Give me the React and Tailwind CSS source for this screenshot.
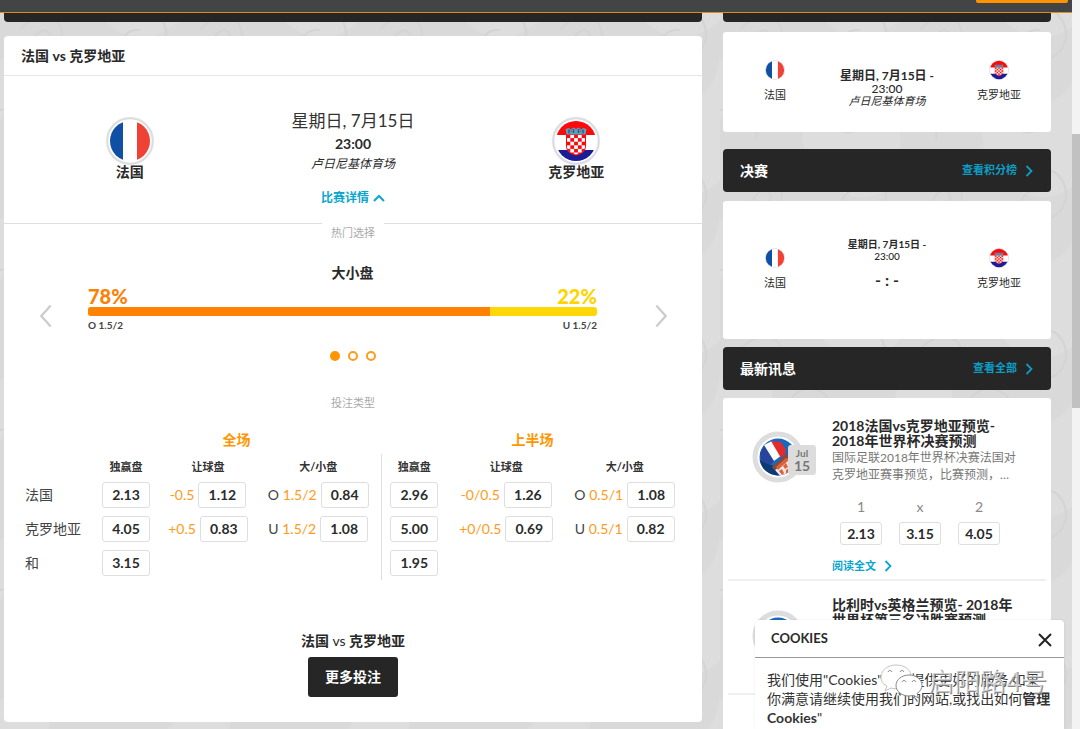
import { useId } from "react";

function Chevron({ className, d, width = 2 }) {
  return (
    <svg viewBox="0 0 12 20" className={className} fill="none" stroke="currentColor" strokeWidth={width} aria-hidden="true">
      <path d={d} />
    </svg>
  );
}

const RIGHT = "M2 1 10 10 2 19";
const LEFT = "M10 1 2 10 10 19";

function ChevronSmall() {
  return (
    <svg viewBox="0 0 8 12" className="h-3 w-2" fill="none" stroke="currentColor" strokeWidth="1.8" aria-hidden="true">
      <path d="M1.5 1 6.5 6 1.5 11" />
    </svg>
  );
}

function FlagFrance({ className, ring }) {
  const id = useId();
  return (
    <svg viewBox="0 0 48 48" className={className} aria-hidden="true">
      <clipPath id={id}>
        <circle cx="24" cy="24" r={ring ? 20 : 22} />
      </clipPath>
      <circle cx="24" cy="24" r="22.8" fill="#fff" stroke="#dedede" strokeWidth="2.2" />
      <g clipPath={`url(#${id})`}>
        <path fill="#0f50a5" d="M0 0h17v48H0z" />
        <path fill="#fff" d="M17 0h14v48H17z" />
        <path fill="#f04136" d="M31 0h17v48H31z" />
      </g>
    </svg>
  );
}

const checks = [];
for (let row = 0; row < 6; row += 1) {
  for (let col = 0; col < 5; col += 1) {
    if ((row + col) % 2 === 0) checks.push([14.5 + col * 3.8, 17.5 + row * 3.6]);
  }
}

function FlagCroatia({ className, ring }) {
  const id = useId();
  return (
    <svg viewBox="0 0 48 48" className={className} aria-hidden="true">
      <clipPath id={`${id}a`}>
        <circle cx="24" cy="24" r={ring ? 20 : 22} />
      </clipPath>
      <clipPath id={`${id}b`}>
        <path d="M14.5 17.5h19v11.5c0 5-4 8-9.5 9-5.5-1-9.500-4-9.500-9z" />
      </clipPath>
      <circle cx="24" cy="24" r="22.8" fill="#fff" stroke="#dcdce2" strokeWidth="2.2" />
      <g clipPath={`url(#${id}a)`}>
        <path fill="#fff" d="M0 0h48v48H0z" />
        <path fill="#fb0a0c" d="M0 0h48v18H0z" />
        <path fill="#1b1c96" d="M0 33h48v15H0z" />
      </g>
      <g clipPath={`url(#${id}b)`}>
        <path fill="#fff" d="M14 17h20v22H14z" />
        {checks.map(([x, y]) => (
          <rect key={`${x}-${y}`} x={x} y={y} width="3.8" height="3.6" fill="#fb0a0c" />
        ))}
      </g>
      <path d="M14.500 17.500h19v11.500c0 5-4 8-9.500 9-5.500-1-9.500-4-9.500-9z" fill="none" stroke="#fb0a0c" strokeWidth="1" />
      <path d="M14.500 17.500 13.500 12l3.500-1 2 1.500 2.500-2L24 12l2.500-1.500 2.500 2 2-1.500 3.500 1-1 5.500z" fill="#5e9fb5" />
      <path d="M17 12.500v4M21.500 12v4M26.500 12v4M31 12.500v4" stroke="#3054a0" strokeWidth="1.4" />
      <path d="M19.200 13v2M28.800 13v2" stroke="#c0504a" strokeWidth="1" />
    </svg>
  );
}

function NewsBall() {
  const id = useId();
  return (
    <svg viewBox="0 0 52 52" className="size-[52px]" aria-hidden="true">
      <clipPath id={id}>
        <circle cx="26" cy="26" r="18.5" />
      </clipPath>
      <circle cx="26" cy="26" r="23" fill="#fff" stroke="#dedddd" strokeWidth="5" />
      <g clipPath={`url(#${id})`}>
        <path fill="#1769bd" d="M0 0h52v52H0z" />
        <path fill="#0d3a75" d="M6 28 24 36 44 24V52H6z" />
        <path fill="#27449b" d="M8 22 13 14l10 15-5 5-9-4z" />
        <path fill="#fff" d="M12 14 20 10l10 14-8 6z" />
        <path fill="#e22b2e" d="M19 10 29 11l5 8-1 5-4 3z" />
        <path fill="#8a4a3a" d="M20 36 35 23l5-1-1 4-17 13z" />
        <path fill="#f3e9e6" d="M23 39 38 27l7 3-7 12-9 4z" />
        <path fill="#e0603c" d="m24 36 10-9 4 1-12 11zM31 35l3-3 2 4-3 2zM27 40l3-2 2 4-2 2zM34 39l3-2v5l-3 1z" />
      </g>
    </svg>
  );
}

function Backdrop() {
  return (
    <svg className="absolute inset-0 -z-10 size-full" aria-hidden="true">
      <defs>
        <pattern id="swirls" width="180" height="160" patternUnits="userSpaceOnUse">
          <rect width="180" height="160" fill="#dddddd" />
          <path d="M0 60c40-30 70 10 40 40S-10 100 0 150v10H90c-20-30 0-70 40-60s50-30 50-50V20c-30 30-70 20-90-20H0z" fill="#d9d9d9" />
          <g fill="none" stroke="#d4d4d4" strokeWidth="2">
            <path d="M20 30c20-25 50-10 40 12s-36 12-26-4 22-2 14 4" />
            <path d="M100 130c-15-30 20-50 38-30s-6 42-20 28 4-24 12-14" />
            <path d="M150 10c25 10 20 50-10 50s-20-34 0-30M0 110c20-6 40 8 36 30M70 80c10-16 30-14 40 0" />
          </g>
        </pattern>
      </defs>
      <rect width="100%" height="100%" fill="url(#swirls)" />
    </svg>
  );
}

function Odd({ children, small }) {
  return (
    <button
      type="button"
      className={
        small
          ? "h-[23px] w-[42px] rounded-[3px] border border-[#dedede] bg-white text-sm leading-none font-bold text-[#2b2b2b]"
          : "h-[26px] w-12 rounded-[3px] border border-[#dedede] bg-white text-sm leading-none font-bold text-[#2b2b2b]"
      }
    >
      {children}
    </button>
  );
}

function Line({ side, value, odd }) {
  return (
    <div className="flex items-center justify-center gap-1 whitespace-nowrap">
      <span className="text-[#ff9a1c]">
        {side && <span className="text-[#444]">{side} </span>}
        {value}
      </span>
      <Odd>{odd}</Odd>
    </div>
  );
}

const rows = [
  { name: "法国", full: ["2.13", ["", "-0.5", "1.12"], ["O", "1.5/2", "0.84"]], half: ["2.96", ["", "-0/0.5", "1.26"], ["O", "0.5/1", "1.08"]] },
  { name: "克罗地亚", full: ["4.05", ["", "+0.5", "0.83"], ["U", "1.5/2", "1.08"]], half: ["5.00", ["", "+0/0.5", "0.69"], ["U", "0.5/1", "0.82"]] },
  { name: "和", full: ["3.15"], half: ["1.95"] },
];

function OddCells({ cells, divided }) {
  return [0, 1, 2].map((i) => {
    const cell = cells[i];
    return (
      <td key={i} className={divided && i === 0 ? "border-l border-[#dedede] p-0 text-center" : "p-0 text-center"}>
        {typeof cell === "string" && <Odd>{cell}</Odd>}
        {Array.isArray(cell) && <Line side={cell[0]} value={cell[1]} odd={cell[2]} />}
      </td>
    );
  });
}

function OddsTable() {
  return (
    <table className="w-full table-fixed border-collapse text-sm leading-none text-[#444]">
      <colgroup>
        <col className="w-[88px]" />
        <col className="w-[68px]" />
        <col className="w-[96px]" />
        <col className="w-[125px]" />
        <col className="w-[66px]" />
        <col />
        <col />
      </colgroup>
      <thead>
        <tr className="h-7 text-[#ff9600]">
          <td />
          <th colSpan={3} scope="colgroup">全场</th>
          <th colSpan={3} scope="colgroup">上半场</th>
        </tr>
        <tr className="h-6 text-[11px] font-bold text-[#333]">
          <td />
          <th scope="col">独赢盘</th>
          <th scope="col">让球盘</th>
          <th scope="col">大/小盘</th>
          <th scope="col" className="border-l border-[#dedede]">独赢盘</th>
          <th scope="col">让球盘</th>
          <th scope="col">大/小盘</th>
        </tr>
      </thead>
      <tbody>
        {rows.map((r) => (
          <tr key={r.name} className="h-[34px]">
            <th scope="row" className="p-0 pl-[21px] text-left font-normal whitespace-nowrap">{r.name}</th>
            <OddCells cells={r.full} />
            <OddCells cells={r.half} divided />
          </tr>
        ))}
      </tbody>
    </table>
  );
}

function MatchCard() {
  return (
    <section className="mt-[14px] flex flex-col rounded-[4px] bg-white pb-[25px]">
      <h2 className="flex h-10 items-center border-b border-[#e6e6e6] px-[17px] text-sm font-bold">法国 vs 克罗地亚</h2>

      <div className="grid h-[147px] grid-cols-3 px-[14px] pt-[33px] text-center">
        <div className="flex flex-col items-center pt-2">
          <FlagFrance ring className="size-12" />
          <span className="text-sm leading-[14px] font-bold">法国</span>
        </div>
        <div className="flex flex-col items-center">
          <span className="text-[17px] leading-6 whitespace-nowrap text-[#333]">星期日, 7月15日</span>
          <span className="text-sm leading-[22px] font-bold">23:00</span>
          <em className="text-xs leading-[18px]">卢日尼基体育场</em>
          <button type="button" className="mt-4 flex items-center gap-1 text-xs leading-[18px] font-bold text-[#0ba6cf]">
            比赛详情
            <svg viewBox="0 0 12 8" className="h-2 w-3" fill="none" stroke="currentColor" strokeWidth="2" aria-hidden="true">
              <path d="M1 7 6 2l5 5" />
            </svg>
          </button>
        </div>
        <div className="flex flex-col items-center pt-2">
          <FlagCroatia ring className="size-12" />
          <span className="text-sm leading-[14px] font-bold">克罗地亚</span>
        </div>
      </div>

      <div className="flex items-start">
        <span className="h-px flex-1 bg-[#dedede]" />
        <span className="w-[62px] text-center text-[11px] leading-5 text-[#aaa]">热门选择</span>
        <span className="h-px flex-1 bg-[#dedede]" />
      </div>

      <div className="mt-5 flex items-center">
        <button type="button" aria-label="上一个" className="flex w-[84px] justify-center pt-[34px] text-[#ccc]">
          <Chevron className="h-6 w-[14px]" d={LEFT} />
        </button>
        <div className="flex-1">
          <h3 className="pl-5 text-center text-sm leading-5 font-bold">大小盘</h3>
          <div className="mt-[3px] flex justify-between text-xl leading-5 font-black">
            <span className="text-[#f98207]">78%</span>
            <span className="text-[#ffd400]">22%</span>
          </div>
          <div className="mt-px flex h-[9px] overflow-hidden rounded-[3px] bg-[#ffd607]">
            <div className="w-[79%] bg-[#ff8205]" />
          </div>
          <div className="flex justify-between text-[10px] leading-[18px] font-bold text-[#444]">
            <span>O 1.5/2</span>
            <span>U 1.5/2</span>
          </div>
        </div>
        <button type="button" aria-label="下一个" className="flex w-[105px] pt-[34px] pl-[57px] text-[#ccc]">
          <Chevron className="h-6 w-[14px]" d={RIGHT} />
        </button>
      </div>

      <div className="mt-[17px] flex justify-center gap-2">
        <button type="button" aria-label="1" className="size-[10px] rounded-full bg-[#ff9600]" />
        <button type="button" aria-label="2" className="size-[10px] rounded-full border-2 border-[#ff9c1c]" />
        <button type="button" aria-label="3" className="size-[10px] rounded-full border-2 border-[#ff9c1c]" />
      </div>

      <p className="mt-8 text-center text-[11px] leading-5 text-[#aaa]">投注类型</p>
      <div className="mt-[13px] pr-[18px]">
        <OddsTable />
      </div>

      <p className="mt-[51px] text-center text-sm leading-5 font-bold">
        法国 <span className="font-normal">vs</span> 克罗地亚
      </p>
      <button type="button" className="mt-[6px] h-10 w-[90px] self-center rounded-[3px] bg-[#262626] text-sm font-bold text-white">
        更多投注
      </button>
    </section>
  );
}

function SideTeam({ flag, name }) {
  return (
    <div className="flex flex-col items-center gap-[6px]">
      {flag}
      <span className="text-[11px] leading-[18px]">{name}</span>
    </div>
  );
}

function SideMatch({ tall, children }) {
  return (
    <section
      className={
        tall
          ? "mt-[9px] grid h-[138px] grid-cols-[104px_1fr_104px] rounded-[3px] bg-white pt-[47px]"
          : "mt-[10px] grid h-[100px] grid-cols-[104px_1fr_104px] rounded-[3px] bg-white pt-[28px]"
      }
    >
      <SideTeam flag={<FlagFrance className="size-5" />} name="法国" />
      {children}
      <SideTeam flag={<FlagCroatia className="size-5" />} name="克罗地亚" />
    </section>
  );
}

function SideHeader({ title, link, className }) {
  return (
    <header className={`flex h-[43px] items-center justify-between rounded-[4px] bg-[#262626] pr-[18px] pl-[17px] ${className}`}>
      <h2 className="text-sm font-bold text-white">{title}</h2>
      <a href="#" className="flex items-center gap-2 text-[11px] font-bold text-[#0d9dc4]">
        {link}
        <ChevronSmall />
      </a>
    </header>
  );
}

function NewsItem({ title, text, odds, date, className = "" }) {
  return (
    <article className={`mx-[5px] flex border-b-2 border-[#efefef] pb-1 ${className}`}>
      <div className="relative ml-6 w-20 shrink-0 self-start pt-[13px]">
        <NewsBall />
        {date && (
          <div className="absolute top-[27px] left-9 flex h-[30px] w-7 flex-col items-center rounded-[3px] bg-[#dcdcdc] pt-[2px] font-bold text-[#777]">
            <span className="text-[10px] leading-[12px]">{date[0]}</span>
            <span className="text-sm leading-[13px]">{date[1]}</span>
          </div>
        )}
      </div>
      <div className="min-w-0 flex-1">
        <h3 className="text-sm leading-[15px] font-bold whitespace-pre-line">{title}</h3>
        {text && <p className="pt-px text-xs leading-[17px] whitespace-pre-line text-[#777]">{text}</p>}
        {odds && (
          <div className="mt-3 flex gap-[17px] pl-2">
            {odds.map(([label, odd]) => (
              <div key={label} className="flex flex-col items-center gap-1">
                <span className="text-sm leading-[23px] text-[#888]">{label}</span>
                <Odd small>{odd}</Odd>
              </div>
            ))}
          </div>
        )}
        {odds && (
          <a href="#" className="mt-3 flex items-center gap-2 text-[11px] leading-[18px] font-bold text-[#0ba6cf]">
            阅读全文
            <ChevronSmall />
          </a>
        )}
      </div>
    </article>
  );
}

function Sidebar() {
  return (
    <aside className="flex w-[328px] shrink-0 flex-col">
      <div className="h-[9px] rounded-b-[4px] bg-[#262626]" />
      <SideMatch>
        <div className="flex flex-col items-center pt-[9px] text-center">
          <span className="text-xs leading-[13px] font-bold whitespace-nowrap">星期日, 7月15日 -</span>
          <span className="text-xs leading-[13px] font-medium">23:00</span>
          <em className="text-[11px] leading-[11px]">卢日尼基体育场</em>
        </div>
      </SideMatch>

      <SideHeader title="决赛" link="查看积分榜" className="mt-[17px]" />
      <SideMatch tall>
        <div className="-mt-[10px] flex flex-col items-center text-center">
          <span className="text-[10px] leading-[12px] font-bold whitespace-nowrap">星期日, 7月15日 -</span>
          <span className="text-[10px] leading-[12px] font-medium">23:00</span>
          <span className="mt-[6px] text-base leading-6 font-bold">- : -</span>
        </div>
      </SideMatch>

      <SideHeader title="最新讯息" link="查看全部" className="mt-[8px]" />
      <section className="mt-[8px] flex flex-col gap-4 rounded-[3px] bg-white pt-5 pb-12">
        <NewsItem
          date={["Jul", "15"]}
          title={"2018法国vs克罗地亚预览-\n2018年世界杯决赛预测"}
          text={"国际足联2018年世界杯决赛法国对\n克罗地亚赛事预览，比赛预测，…"}
          odds={[["1", "2.13"], ["x", "3.15"], ["2", "4.05"]]}
        />
        <NewsItem className="min-h-[98px]" title={"比利时vs英格兰预览- 2018年\n世界杯第三名决胜赛预测"} />
      </section>
    </aside>
  );
}

function Watermark() {
  return (
    <div className="pointer-events-none absolute top-[43px] right-[17px] flex items-center gap-1">
      <svg viewBox="0 0 44 36" className="h-9 w-11" fill="#fff" stroke="#c4c4c4" strokeWidth="1" aria-hidden="true">
        <path d="M16 2C8 2 1 7 1 14c0 4 2 7 6 9l-2 5 6-3c2 .6 4 .8 6 .7C33 25 31 14 31 12 30 6 24 2 16 2z" />
        <path stroke="#888" d="M29 12c-7 0-13 4.500-13 10.500S22 33 29 33c1.500 0 3-.2 4.500-.7l5 2.700-1.500-4.500c3-2 5-5 5-8C42 16.500 36 12 29 12z" />
        <path d="M8 9c1-2 3-2 4 0M20 9c1-2 3-2 4 0M22 19c1-2 3-2 4 0M32 19c1-2 3-2 4 0" fill="none" stroke="#777" />
      </svg>
      <span className="text-[26px] leading-8 whitespace-nowrap text-white/60 [text-shadow:1px_1px_0_#888]">启阳路4号</span>
    </div>
  );
}

function CookieNotice() {
  return (
    <section aria-label="Cookies" className="absolute right-2 bottom-0 h-[109px] w-[309px] rounded-t-[4px] bg-white shadow-[0_0_3px_rgba(0,0,0,0.08)]">
      <header className="flex h-[38px] items-center justify-between border-b border-[#999] pr-3 pl-4">
        <h2 className="text-[13px] font-bold">COOKIES</h2>
        <button type="button" aria-label="关闭" className="pt-[2px]">
          <svg viewBox="0 0 14 14" className="size-[14px]" fill="none" stroke="#222" strokeWidth="2" aria-hidden="true">
            <path d="M1 1 13 13M13 1 1 13" />
          </svg>
        </button>
      </header>
      <p className="pt-[12px] pl-3 text-sm leading-[19px] whitespace-nowrap text-[#333]">
        我们使用"Cookies"以便提供更好的服务,如果
        <br />
        你满意请继续使用我们的网站,或找出如何<b>管理</b>
        <br />
        <b>Cookies</b>"
      </p>
      <Watermark />
    </section>
  );
}

export default function App() {
  return (
    <div className="isolate flex h-screen overflow-hidden bg-[#dcdcdc] font-['Lato','Noto_Sans_CJK_SC',sans-serif] text-[#2a2a2a]">
      <div className="relative flex min-w-0 flex-1 flex-col overflow-hidden">
        <Backdrop />
        <header className="flex h-[13px] shrink-0 items-start justify-end border-b border-[#e08c1c] bg-[#434445] pr-1">
          <div className="h-[3px] w-[92px] rounded-b-[2px] bg-[#ff9200]" />
        </header>
        <div className="flex gap-[21px] pr-[21px] pl-1">
          <main className="min-w-0 flex-1">
            <div className="h-[9px] rounded-b-[4px] bg-[#262626]" />
            <MatchCard />
          </main>
          <Sidebar />
        </div>
        <CookieNotice />
      </div>
      <div className="flex w-2 shrink-0 flex-col bg-[#f3f3f3] pt-[134px]" aria-hidden="true">
        <div className="h-[274px] bg-[#c1c1c1]" />
      </div>
    </div>
  );
}
